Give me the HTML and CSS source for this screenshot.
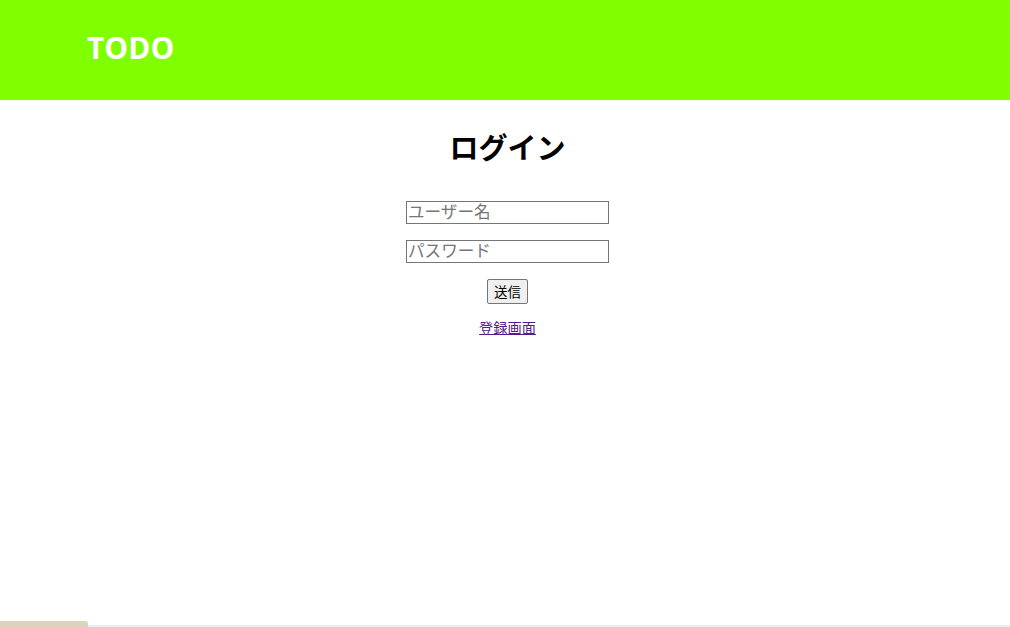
FILE: index.html
```html
<!DOCTYPE html>
<html lang="ja">
<head>
<meta charset="utf-8">
<title>TODO</title>
<link rel="stylesheet" href="styles.css">
</head>
<body>
<header class="site-header">
  <div class="brand">TODO</div>
</header>
<main class="login">
  <h1 class="login-title">ログイン</h1>
  <form class="login-form">
    <input class="field" type="text" placeholder="ユーザー名">
    <input class="field" type="password" placeholder="パスワード">
    <button class="submit" type="button">送信</button>
  </form>
  <a class="register-link" href="#">登録画面</a>
</main>
<div class="scroll-thumb"></div>
</body>
</html>
```
FILE: styles.css
```css
html, body {
  margin: 0;
  padding: 0;
  background: #ffffff;
  font-family: "Noto Sans CJK JP", "Noto Sans", sans-serif;
}
.site-header {
  height: 100px;
  background: #80ff00;
  display: flex;
  align-items: center;
  padding-left: 87px;
  box-sizing: border-box;
}
.brand {
  color: #ffffff;
  font-family: "Open Sans", "Noto Sans", sans-serif;
  font-weight: 700;
  font-size: 30px;
  line-height: 1;
  margin-top: -4px;
}
.login {
  display: flex;
  flex-direction: column;
  align-items: center;
  padding-left: 5px;
}
.login-title {
  margin: 26px 0 0 0;
  font-size: 29px;
  font-weight: 700;
  line-height: 40px;
  color: #000;
}
.login-form {
  display: flex;
  flex-direction: column;
  align-items: center;
  margin-top: 35px;
}
.field {
  width: 203px;
  height: 23px;
  box-sizing: border-box;
  border: 1px solid #767676;
  padding: 0 1px 3px 1px;
  margin: 0 0 16px 0;
  font-family: "Noto Sans CJK JP", sans-serif;
  font-size: 16.6px;
  line-height: 18px;
  border-radius: 0;
  outline: none;
}
.field::placeholder {
  color: #767676;
}
.submit {
  width: 41px;
  height: 25px;
  box-sizing: border-box;
  padding: 0 0 2px 0;
  margin: 0;
  border: 1px solid #767676;
  border-radius: 2px;
  background: #efefef;
  font-family: "Noto Sans CJK JP", sans-serif;
  font-size: 13.5px;
  color: #000;
}
.register-link {
  margin-top: 14px;
  font-size: 14.2px;
  line-height: 18px;
  color: #551a8b;
  text-decoration: underline;
}
.scroll-thumb {
  position: fixed;
  left: 0;
  bottom: 0;
  width: 88px;
  height: 6px;
  background: #ddd3bd;
  border-top-right-radius: 3px;
}
body::after {
  content: "";
  position: fixed;
  left: 0;
  right: 0;
  bottom: 0;
  height: 2px;
  background: #ededed;
  z-index: -1;
}
```
